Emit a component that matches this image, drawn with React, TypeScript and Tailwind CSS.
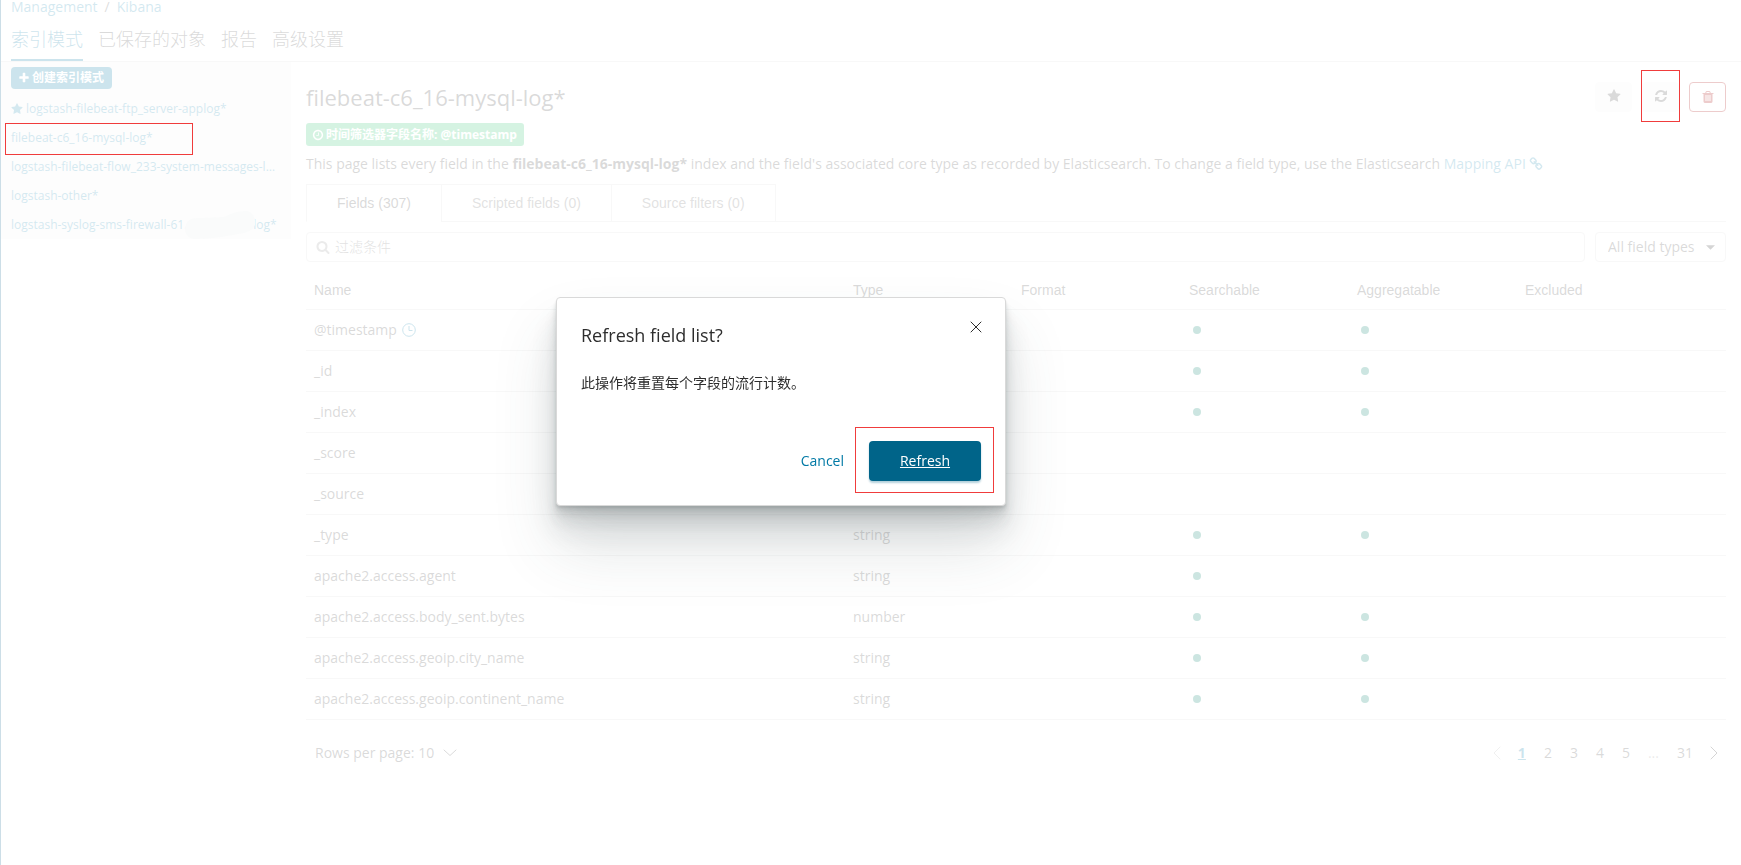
import type { ReactNode } from 'react';

const ICONS = {
    plus: 'M1600 736v192q0 40-28 68t-68 28h-416v416q0 40-28 68t-68 28h-192q-40 0-68-28t-28-68v-416h-416q-40 0-68-28t-28-68v-192q0-40 28-68t68-28h416v-416q0-40 28-68t68-28h192q40 0 68 28t28 68v416h416q40 0 68 28t28 68z',
    star: 'M1728 647q0 22-26 48l-363 354 86 500q1 7 1 20 0 21-10.5 35.5t-30.5 14.5q-19 0-40-12l-449-236-449 236q-22 12-40 12-21 0-31.5-14.5t-10.5-35.5q0-6 2-20l86-500-364-354q-25-27-25-48 0-37 56-46l502-73 225-455q19-41 49-41t49 41l225 455 502 73q56 9 56 46z',
    clock: 'M1024 544v448q0 14-9 23t-23 9h-320q-14 0-23-9t-9-23v-64q0-14 9-23t23-9h224v-352q0-14 9-23t23-9h64q14 0 23 9t9 23zm416 352q0-148-73-273t-198-198-273-73-273 73-198 198-73 273 73 273 198 198 273 73 273-73 198-198 73-273zm224 0q0 209-103 385.5t-279.5 279.5-385.5 103-385.5-103-279.5-279.5-103-385.5 103-385.5 279.5-279.5 385.5-103 385.5 103 279.5 279.5 103 385.5z',
    refresh:
        'M1639 1056q0 5-1 7-64 268-268 434.5t-478 166.5q-146 0-282.5-55t-243.5-157l-129 129q-19 19-45 19t-45-19-19-45v-448q0-26 19-45t45-19h448q26 0 45 19t19 45-19 45l-137 137q71 66 161 102t187 36q134 0 250-65t186-179q11-17 53-117 8-23 30-23h192q13 0 22.5 9.5t9.5 22.5zm25-800v448q0 26-19 45t-45 19h-448q-26 0-45-19t-19-45 19-45l138-138q-148-137-349-137-134 0-250 65t-186 179q-11 17-53 117-8 23-30 23h-199q-13 0-22.5-9.5t-9.5-22.5v-7q65-268 270-434.5t480-166.5q146 0 284 55.5t245 156.5l130-129q19-19 45-19t45 19 19 45z',
    trash: 'M704 1376v-704q0-14-9-23t-23-9h-64q-14 0-23 9t-9 23v704q0 14 9 23t23 9h64q14 0 23-9t9-23zm256 0v-704q0-14-9-23t-23-9h-64q-14 0-23 9t-9 23v704q0 14 9 23t23 9h64q14 0 23-9t9-23zm256 0v-704q0-14-9-23t-23-9h-64q-14 0-23 9t-9 23v704q0 14 9 23t23 9h64q14 0 23-9t9-23zm-544-992h448l-48-117q-7-9-17-11h-317q-10 2-17 11zm928 32v64q0 14-9 23t-23 9h-96v948q0 83-47 143.5t-113 60.5h-832q-66 0-113-58.5t-47-141.5v-952h-96q-14 0-23-9t-9-23v-64q0-14 9-23t23-9h309l70-167q15-37 54-63t79-26h320q40 0 79 26t54 63l70 167h309q14 0 23 9t9 23z',
    search: 'M1216 832q0-185-131.5-316.5t-316.5-131.5-316.5 131.5-131.5 316.5 131.5 316.5 316.5 131.5 316.5-131.5 131.5-316.5zm512 832q0 52-38 90t-90 38q-54 0-90-38l-343-342q-179 124-399 124-143 0-273.5-55.5t-225-150-150-225-55.5-273.5 55.5-273.5 150-225 225-150 273.5-55.5 273.5 55.5 225 150 150 225 55.5 273.5q0 220-124 399l343 343q37 37 37 90z',
    link: 'M1520 1216q0-40-28-68l-208-208q-28-28-68-28-42 0-72 32 3 3 19 18.5t21.5 21.5 15 19 13 25.5 3.5 27.5q0 40-28 68t-68 28q-15 0-27.5-3.5t-25.5-13-19-15-21.5-21.5-18.5-19q-33 31-33 73 0 40 28 68l206 207q27 27 68 27 40 0 68-26l147-146q28-28 28-67zm-703-705q0-40-28-68l-206-207q-28-28-68-28-39 0-68 27l-147 146q-28 28-28 67 0 40 28 68l208 208q27 27 68 27 42 0 72-31-3-3-19-18.5t-21.5-21.5-15-19-13-25.5-3.5-27.5q0-40 28-68t68-28q15 0 27.5 3.5t25.5 13 19 15 21.5 21.5 18.5 19q33-31 33-73zm895 705q0 120-85 203l-147 146q-83 83-203 83-121 0-204-85l-206-207q-83-83-83-203 0-123 88-209l-88-88q-86 88-208 88-120 0-204-84l-208-208q-84-84-84-204t85-203l147-146q83-83 203-83 121 0 204 85l206 207q83 83 83 203 0 123-88 209l88 88q86-88 208-88 120 0 204 84l208 208q84 84 84 204z',
};

const sections = ['索引模式', '已保存的对象', '报告', '高级设置'];

const tabs = ['Fields (307)', 'Scripted fields (0)', 'Source filters (0)'];

const columns = [
    { label: 'Name', width: '' },
    { label: 'Type', width: 'w-[168px]' },
    { label: 'Format', width: 'w-[168px]' },
    { label: 'Searchable', width: 'w-[168px]' },
    { label: 'Aggregatable', width: 'w-[168px]' },
    { label: 'Excluded', width: 'w-[209px]' },
];

type Field = {
    name: string;
    type: string;
    searchable?: boolean;
    aggregatable?: boolean;
    time?: boolean;
};

const fields: Field[] = [
    { name: '@timestamp', type: 'date', searchable: true, aggregatable: true, time: true },
    { name: '_id', type: 'string', searchable: true, aggregatable: true },
    { name: '_index', type: 'string', searchable: true, aggregatable: true },
    { name: '_score', type: 'number' },
    { name: '_source', type: '_source' },
    { name: '_type', type: 'string', searchable: true, aggregatable: true },
    { name: 'apache2.access.agent', type: 'string', searchable: true },
    { name: 'apache2.access.body_sent.bytes', type: 'number', searchable: true, aggregatable: true },
    { name: 'apache2.access.geoip.city_name', type: 'string', searchable: true, aggregatable: true },
    { name: 'apache2.access.geoip.continent_name', type: 'string', searchable: true, aggregatable: true },
];

export default function App() {
    return (
        <div className="min-h-screen border-l border-[#005a87] bg-white font-['Open_Sans','Noto_Sans_CJK_SC',sans-serif] text-sm text-[#484848]">
            <header className="border-b border-[#d9d9d9] px-[10px]">
                <nav aria-label="Breadcrumb" className="flex h-4 gap-[7px] leading-[14px] text-[#2a8fb5]">
                    <a href="#management">Management</a>
                    <span className="text-[#5a5a5a]">/</span>
                    <a href="#kibana">Kibana</a>
                </nav>
                <nav className="flex gap-[15px] pt-[7px] text-lg">
                    {sections.map((section, i) => (
                        <a
                            key={section}
                            href="#section"
                            className={
                                i === 0
                                    ? 'h-[38px] border-b-2 border-[#0079a5] leading-8 font-light text-[#0079a5]'
                                    : 'h-[38px] leading-8 font-light'
                            }
                        >
                            {section}
                        </a>
                    ))}
                </nav>
            </header>

            <div className="flex items-start">
                <Sidebar />
                <main className="min-w-0 flex-1 pt-[11px] pr-[15px] pl-[15px]">
                    <Heading />
                    <FieldTabs />
                    <Filters />
                    <FieldTable />
                    <Pagination />
                </main>
            </div>

            <div className="fixed inset-0 z-10 bg-white/80" />
            <RefreshDialog />
        </div>
    );
}

function Icon({ name, className }: { name: keyof typeof ICONS; className?: string }) {
    return (
        <svg viewBox="0 0 1792 1792" fill="currentColor" aria-hidden="true" className={className}>
            <path d={ICONS[name]} />
        </svg>
    );
}

// red outline that sits above the dimmed page
function Marker({ className }: { className: string }) {
    return <span className={`pointer-events-none absolute border border-[#f03c3c] ${className}`} />;
}

function Sidebar() {
    return (
        <aside className="w-[290px] shrink-0 bg-[#f3f3f3] px-[10px] pt-[5px] text-xs text-[#2a8fb5]">
            <button
                type="button"
                className="flex h-[22px] items-center gap-[2px] rounded bg-[#0079a5] pr-2 pl-[7px] font-bold text-white"
            >
                <Icon name="plus" className="size-3" />
                创建索引模式
            </button>
            <ul className="pt-[5px]">
                <SidebarItem>
                    <Icon name="star" className="mr-[3px] size-3 shrink-0" />
                    logstash-filebeat-ftp_server-applog*
                </SidebarItem>
                <li className="relative">
                    <a href="#pattern" className="flex h-[29px] items-center">
                        filebeat-c6_16-mysql-log*
                    </a>
                    <Marker className="top-0 -left-[6px] z-20 h-8 w-[188px]" />
                </li>
                <SidebarItem>
                    <span className="truncate">logstash-filebeat-flow_233-system-messages-log*</span>
                </SidebarItem>
                <SidebarItem>logstash-other*</SidebarItem>
                <SidebarItem>
                    <span>logstash-syslog-sms-firewall-61.</span>
                    <svg viewBox="0 0 72 30" aria-hidden="true" className="relative z-20 -mx-[3px] h-[30px] w-[72px] shrink-0">
                        <path
                            d="M2 14Q5 7 16 8L40 7Q52 0 64 1Q72 4 71 15Q68 23 54 24L38 27Q24 29 10 29Q-2 26 2 14Z"
                            fill="#fafbfb"
                        />
                    </svg>
                    <span>log*</span>
                </SidebarItem>
            </ul>
        </aside>
    );
}

function SidebarItem({ children }: { children: ReactNode }) {
    return (
        <li>
            <a href="#pattern" className="flex h-[29px] items-center pr-1 whitespace-nowrap">
                {children}
            </a>
        </li>
    );
}

function Heading() {
    return (
        <>
            <div className="flex items-start justify-between">
                <h1 className="pt-[7px] text-[22px] leading-[34px]">filebeat-c6_16-mysql-log*</h1>
                <div className="flex gap-[10px] pt-[9px]">
                    <button
                        type="button"
                        aria-label="Set as default index"
                        className="flex h-[30px] w-[37px] items-center justify-center rounded bg-[#f5f5f5] pb-[2px]"
                    >
                        <Icon name="star" className="size-[14px]" />
                    </button>
                    <div className="relative">
                        <button
                            type="button"
                            aria-label="Refresh field list"
                            className="flex h-[30px] w-[37px] items-center justify-center rounded bg-[#f5f5f5] pb-[2px]"
                        >
                            <Icon name="refresh" className="size-[14px]" />
                        </button>
                        <Marker className="-top-3 -left-px z-20 h-[52px] w-[39px]" />
                    </div>
                    <button
                        type="button"
                        aria-label="Remove index pattern"
                        className="flex h-[30px] w-[37px] items-center justify-center rounded border border-[#a30000] bg-white text-[#a30000]"
                    >
                        <Icon name="trash" className="size-[14px]" />
                    </button>
                </div>
            </div>
            <div className="mt-[9px] flex h-[23px] w-fit items-center gap-[2px] rounded-[3px] bg-[#31c471] pr-[7px] pl-[6px] text-xs font-bold text-white">
                <Icon name="clock" className="size-3" />
                时间筛选器字段名称: @timestamp
            </div>
            <p className="mt-2 leading-5">
                This page lists every field in the <strong className="font-bold">filebeat-c6_16-mysql-log*</strong>{' '}
                index and the field's associated core type as recorded by Elasticsearch. To change a field type, use the
                Elasticsearch{' '}
                <a href="#mapping" className="text-[#2a8fb5]">
                    Mapping API <Icon name="link" className="inline size-[14px] align-[-2px]" />
                </a>
            </p>
        </>
    );
}

function FieldTabs() {
    return (
        <div className="mt-[10px] flex font-['Liberation_Sans',sans-serif]">
            {tabs.map((tab, i) => (
                <button
                    key={tab}
                    type="button"
                    className={
                        i === 0
                            ? 'h-[38px] border-t border-b border-l border-[#d9d9d9] border-b-transparent px-[30px]'
                            : 'h-[38px] border-t border-b border-l border-[#d9d9d9] px-[30px] text-[#6e6e6e]'
                    }
                >
                    {tab}
                </button>
            ))}
            <div className="flex-1 border-b border-l border-[#d9d9d9]" />
        </div>
    );
}

function Filters() {
    return (
        <div className="mt-[10px] flex gap-[10px]">
            <label className="flex h-[30px] flex-1 items-center gap-[5px] rounded border border-[#d9d9d9] px-[9px]">
                <Icon name="search" className="size-[14px] text-[#999]" />
                <input
                    type="text"
                    aria-label="过滤条件"
                    placeholder="过滤条件"
                    className="min-w-0 flex-1 font-light outline-none placeholder:text-[#6e6e6e]"
                />
            </label>
            <div className="relative">
                <select
                    aria-label="Field type"
                    className="h-[30px] w-[131px] appearance-none rounded border border-[#d9d9d9] pl-3"
                >
                    <option>All field types</option>
                </select>
                <svg
                    viewBox="0 0 8 4"
                    aria-hidden="true"
                    className="pointer-events-none absolute top-[13px] right-[11px] h-[5px] w-[9px] fill-[#2d2d2d]"
                >
                    <path d="M0 0h8L4 4z" />
                </svg>
            </div>
        </div>
    );
}

function FieldTable() {
    return (
        <table className="mt-2 w-full table-fixed border-collapse text-left">
            <thead>
                <tr className="border-b border-[#d9d9d9] font-['Liberation_Sans',sans-serif]">
                    {columns.map(({ label, width }) => (
                        <th key={label} scope="col" className={`h-[39px] px-2 pt-[2px] font-normal ${width}`}>
                            {label}
                        </th>
                    ))}
                </tr>
            </thead>
            <tbody>
                {fields.map((field) => (
                    <tr key={field.name} className="border-b border-[#d9d9d9]">
                        <td className="h-[41px] px-2">
                            <span className="flex items-center gap-[5px]">
                                {field.name}
                                {field.time ? <TimeIcon /> : null}
                            </span>
                        </td>
                        <td className="px-2">{field.type}</td>
                        <td />
                        <td className="px-3">{field.searchable ? <Dot /> : null}</td>
                        <td className="px-3">{field.aggregatable ? <Dot /> : null}</td>
                        <td />
                    </tr>
                ))}
            </tbody>
        </table>
    );
}

function TimeIcon() {
    return (
        <svg viewBox="0 0 14 14" fill="none" stroke="#0079a5" aria-hidden="true" className="size-[14px]">
            <circle cx="7" cy="7" r="6.3" />
            <path d="M7 3v4.5h3.5" />
        </svg>
    );
}

function Dot() {
    return <span className="block size-2 rounded-full bg-[#017f68]" />;
}

function Chevron({ d, className }: { d: string; className: string }) {
    return (
        <svg viewBox="0 0 16 16" fill="none" stroke="currentColor" aria-hidden="true" className={className}>
            <path d={d} strokeLinecap="round" strokeLinejoin="round" />
        </svg>
    );
}

function Pagination() {
    return (
        <div className="mt-[21px] flex h-6 items-center justify-between">
            <button type="button" className="flex items-center gap-2 pl-[9px]">
                Rows per page: 10
                <Chevron d="M2 5l6 5.5L14 5" className="size-4" />
            </button>
            <nav aria-label="Pages" className="flex items-center">
                <button type="button" aria-label="Previous page" className="px-1 text-[#b4b4b4]">
                    <Chevron d="M11 2L5 8l6 6" className="size-4" />
                </button>
                <PageButton current>1</PageButton>
                <PageButton>2</PageButton>
                <PageButton>3</PageButton>
                <PageButton>4</PageButton>
                <PageButton>5</PageButton>
                <span className="px-[9px] text-[#999]">...</span>
                <PageButton>31</PageButton>
                <button type="button" aria-label="Next page" className="px-1 text-[#2d2d2d]">
                    <Chevron d="M5 2l6 6-6 6" className="size-4" />
                </button>
            </nav>
        </div>
    );
}

function PageButton({ current, children }: { current?: boolean; children: ReactNode }) {
    return (
        <button
            type="button"
            aria-current={current ? 'page' : undefined}
            className={current ? 'px-[9px] font-bold text-[#0079a5] underline' : 'px-[9px]'}
        >
            {children}
        </button>
    );
}

function RefreshDialog() {
    return (
        <div className="fixed inset-0 z-20 flex items-center justify-center pr-[179px] pb-[63px] text-[#2d2d2d]">
            <div
                role="dialog"
                aria-labelledby="refresh-title"
                className="w-[450px] rounded border border-[#d9d9d9] bg-white px-6 pt-[21px] pb-6 shadow-[0_40px_64px_0_rgba(65,78,81,0.16),0_24px_32px_0_rgba(65,78,81,0.12),0_16px_16px_0_rgba(65,78,81,0.1),0_8px_8px_0_rgba(65,78,81,0.1),0_4px_4px_0_rgba(65,78,81,0.1),0_2px_2px_0_rgba(65,78,81,0.1)]"
            >
                <div className="flex items-start justify-between">
                    <h2 id="refresh-title" className="text-lg leading-8">
                        Refresh field list?
                    </h2>
                    <button type="button" aria-label="Close" className="-mr-[3px]">
                        <svg viewBox="0 0 16 16" fill="none" stroke="currentColor" aria-hidden="true" className="size-4">
                            <path d="M3 3l10 10M13 3L3 13" strokeLinecap="round" />
                        </svg>
                    </button>
                </div>
                <p className="mt-5 leading-6">此操作将重置每个字段的流行计数。</p>
                <div className="mt-[46px] flex items-center justify-end gap-[25px]">
                    <button type="button" className="text-[#0079a5]">
                        Cancel
                    </button>
                    <div className="relative">
                        <button
                            type="button"
                            className="h-10 w-28 rounded bg-[#006489] text-white underline shadow-[0_2px_2px_0_rgba(0,100,137,0.3)]"
                        >
                            Refresh
                        </button>
                        <Marker className="-top-[14px] -left-[14px] h-[66px] w-[139px]" />
                    </div>
                </div>
            </div>
        </div>
    );
}
